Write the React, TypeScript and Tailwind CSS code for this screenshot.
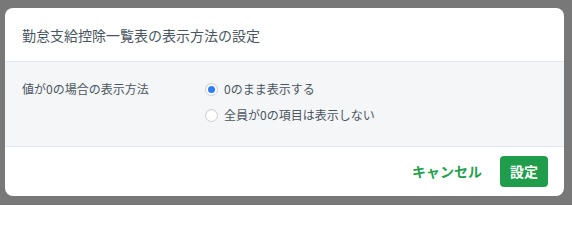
import React, { useState } from "react";

const options = [
  { value: "show", label: "0のまま表示する" },
  { value: "hide", label: "全員が0の項目は表示しない" },
];

const Radio = ({ checked }: { checked: boolean }) => (
  <span className="flex h-[13px] w-[13px] shrink-0 items-center justify-center rounded-full border border-[#c9ced6] bg-white shadow-[inset_0_1px_1px_rgba(0,0,0,0.06)]">
    {checked && <span className="h-[7px] w-[7px] rounded-full bg-[#2f7df6]" />}
  </span>
);

export default function App() {
  const [mode, setMode] = useState("show");

  return (
    <div
      className="h-[205px] w-[572px] bg-[#777877] pl-[5px] pt-[8px]"
      style={{ fontFamily: '"Noto Sans CJK JP", "Noto Sans", sans-serif' }}
    >
      <div className="flex h-[188px] w-[559px] flex-col overflow-hidden rounded-[8px] bg-white">
        <div className="flex h-[54px] items-center border-b border-[#e4e7eb] px-[17px]">
          <h2 className="text-[14px] leading-5 text-[#4a5561]">
            勤怠支給控除一覧表の表示方法の設定
          </h2>
        </div>
        <div className="flex h-[85px] border-b border-[#e4e7eb] bg-[#f5f6f8] px-[17px] pt-[17px]">
          <div className="w-[183px] text-[12px] leading-5 text-[#4a5561]">
            値が0の場合の表示方法
          </div>
          <div className="flex flex-col gap-[6px]">
            {options.map((o) => (
              <label
                key={o.value}
                className="flex h-5 cursor-pointer items-center gap-[6px] text-[12px] text-[#4a5561]"
                onClick={() => setMode(o.value)}
              >
                <Radio checked={mode === o.value} />
                {o.label}
              </label>
            ))}
          </div>
        </div>
        <div className="flex flex-1 items-center justify-end gap-[18px] pr-[16px]">
          <button className="text-[14px] font-bold text-[#25a04e]">キャンセル</button>
          <button className="h-[31px] w-[48px] rounded-[4px] bg-[#1f9d4b] text-[14px] font-bold text-white">
            設定
          </button>
        </div>
      </div>
    </div>
  );
}
